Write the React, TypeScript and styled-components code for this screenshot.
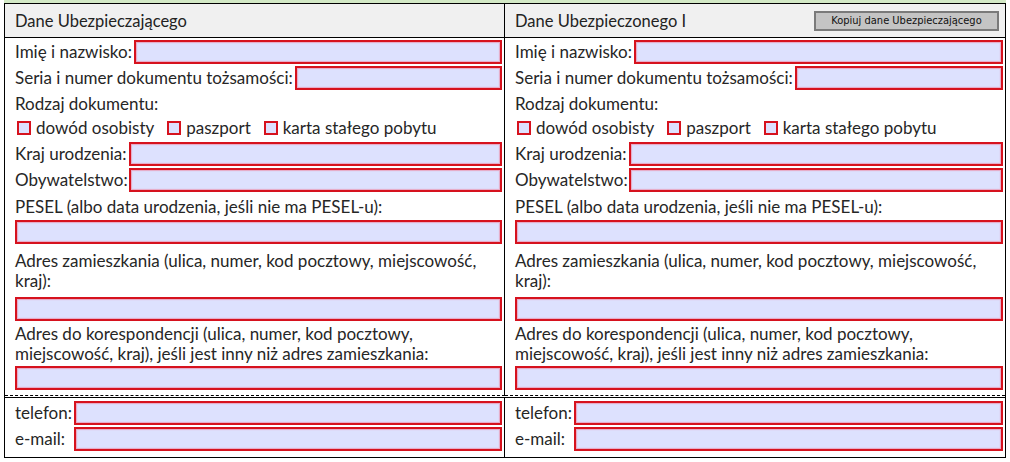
import React from "react";
import styled, { createGlobalStyle } from "styled-components";

const GlobalStyle = createGlobalStyle`
  html, body { margin: 0; padding: 0; background: #fff; }
  body { font-family: Lato, "Open Sans", sans-serif; color: #262626; }
  * { box-sizing: border-box; }
`;

const Page = styled.div`
  padding: 0 4px;
`;

const Frame = styled.div`
  border-top: 3px solid #d3e9c6;
`;

const Table = styled.div`
  display: grid;
  grid-template-columns: 1fr 1fr;
  border: 1px solid #000;
`;

const HeaderCell = styled.div<{ $first?: boolean }>`
  height: 34px;
  display: flex;
  align-items: center;
  justify-content: space-between;
  padding: 0 6px 0 10px;
  background: #f0f0f0;
  border-bottom: 1px solid #000;
  border-right: ${(p) => (p.$first ? "1px solid #000" : "none")};
`;

const HeaderTitle = styled.span`
  font-size: 16.5px;
  line-height: 20px;
  color: #222;
`;

const CopyButton = styled.button`
  width: 185px;
  height: 20px;
  padding: 0;
  border: 2px solid #7a7a7a;
  background: #c4c4c4;
  font-family: "DejaVu Sans Condensed", "Liberation Sans", sans-serif;
  font-size: 11px;
  color: #111;
  cursor: pointer;
`;

const BodyCell = styled.div<{ $first?: boolean }>`
  display: flex;
  flex-direction: column;
  padding: 2px 2px 5px 10px;
  border-bottom: 1px dashed #000;
  border-right: ${(p) => (p.$first ? "1px solid #000" : "none")};
  font-size: 17px;
`;

const ContactCell = styled.div<{ $first?: boolean }>`
  display: grid;
  grid-template-columns: auto 1fr;
  align-items: center;
  column-gap: 2px;
  row-gap: 2px;
  margin-top: 1px;
  padding: 3px 2px 6px 10px;
  border-top: 1px solid #000;
  border-right: ${(p) => (p.$first ? "1px solid #000" : "none")};
  font-size: 17px;
`;

const FieldRow = styled.div<{ $mt?: number }>`
  display: flex;
  align-items: center;
  gap: 2px;
  margin-top: ${(p) => p.$mt ?? 0}px;
`;

const FieldGrid = styled.div<{ $mt?: number }>`
  display: grid;
  grid-template-columns: auto 1fr;
  align-items: center;
  column-gap: 1px;
  row-gap: 2px;
  margin-top: ${(p) => p.$mt ?? 0}px;
`;

const Label = styled.label`
  white-space: nowrap;
  line-height: 20px;
`;

const Text = styled.div<{ $mt?: number; $lh?: number }>`
  margin-top: ${(p) => p.$mt ?? 0}px;
  line-height: ${(p) => p.$lh ?? 20}px;
`;

const Input = styled.input`
  flex: 1;
  min-width: 0;
  width: 100%;
  height: 24px;
  margin: 0;
  padding: 0 4px;
  border: 2px solid #d6121e;
  background: #dde1fe;
  box-shadow: inset 0 0 1px 1px rgba(238, 120, 150, 0.55);
  font-family: inherit;
  font-size: 15px;
  outline: none;
`;

const FullInput = styled(Input)<{ $mt?: number }>`
  flex: none;
  margin-top: ${(p) => p.$mt ?? 0}px;
`;

const CheckRow = styled.div`
  display: flex;
  align-items: center;
  height: 20px;
  margin-top: 4px;
  padding-left: 2px;
  gap: 13px;
`;

const CheckOption = styled.label`
  display: inline-flex;
  align-items: center;
  gap: 5px;
  line-height: 20px;
  white-space: nowrap;
`;

const CheckBox = styled.span`
  display: inline-block;
  width: 14px;
  height: 14px;
  border: 2px solid #d6121e;
  background: #dde1fe;
`;

type ColProps = { first?: boolean };

function Body({ first }: ColProps) {
  return (
    <BodyCell $first={first}>
      <FieldRow>
        <Label>Imię i nazwisko:</Label>
        <Input type="text" />
      </FieldRow>
      <FieldRow $mt={2}>
        <Label>Seria i numer dokumentu tożsamości:</Label>
        <Input type="text" />
      </FieldRow>
      <Text $mt={4}>Rodzaj dokumentu:</Text>
      <CheckRow>
        <CheckOption>
          <CheckBox />
          dowód osobisty
        </CheckOption>
        <CheckOption>
          <CheckBox />
          paszport
        </CheckOption>
        <CheckOption>
          <CheckBox />
          karta stałego pobytu
        </CheckOption>
      </CheckRow>
      <FieldGrid $mt={4}>
        <Label>Kraj urodzenia:</Label>
        <Input type="text" />
        <Label>Obywatelstwo:</Label>
        <Input type="text" />
      </FieldGrid>
      <Text $mt={5}>PESEL (albo data urodzenia, jeśli nie ma PESEL-u):</Text>
      <FullInput type="text" $mt={3} />
      <Text $mt={7} $lh={19.5}>
        Adres zamieszkania (ulica, numer, kod pocztowy, miejscowość, kraj):
      </Text>
      <FullInput type="text" $mt={7} />
      <Text $mt={3} $lh={19.5}>
        Adres do korespondencji (ulica, numer, kod pocztowy, miejscowość, kraj), jeśli jest inny niż adres
        zamieszkania:
      </Text>
      <FullInput type="text" $mt={3} />
    </BodyCell>
  );
}

function Contact({ first }: ColProps) {
  return (
    <ContactCell $first={first}>
      <Label>telefon:</Label>
      <Input type="text" />
      <Label>e-mail:</Label>
      <Input type="text" />
    </ContactCell>
  );
}

export default function App() {
  return (
    <Page>
      <GlobalStyle />
      <Frame>
        <Table>
          <HeaderCell $first>
            <HeaderTitle>Dane Ubezpieczającego</HeaderTitle>
          </HeaderCell>
          <HeaderCell>
            <HeaderTitle>Dane Ubezpieczonego I</HeaderTitle>
            <CopyButton type="button">Kopiuj dane Ubezpieczającego</CopyButton>
          </HeaderCell>
          <Body first />
          <Body />
          <Contact first />
          <Contact />
        </Table>
      </Frame>
    </Page>
  );
}
